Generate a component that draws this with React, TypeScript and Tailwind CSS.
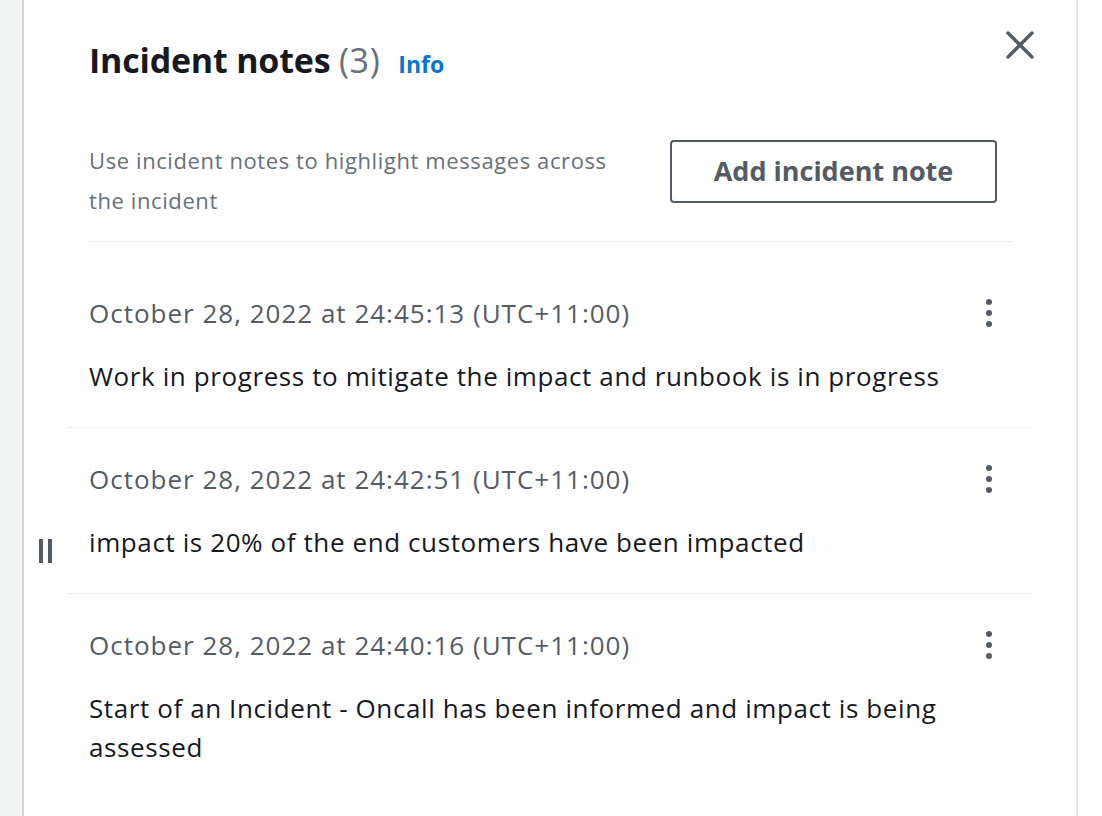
const notes = [
  {
    time: "October 28, 2022 at 24:45:13 (UTC+11:00)",
    text: "Work in progress to mitigate the impact and runbook is in progress",
  },
  {
    time: "October 28, 2022 at 24:42:51 (UTC+11:00)",
    text: "impact is 20% of the end customers have been impacted",
  },
  {
    time: "October 28, 2022 at 24:40:16 (UTC+11:00)",
    text: "Start of an Incident - Oncall has been informed and impact is being assessed",
  },
];

function Kebab() {
  return (
    <button className="flex h-9 w-6 flex-col items-center justify-center gap-[5px]">
      <span className="h-[6px] w-[6px] rounded-full bg-[#545b64]" />
      <span className="h-[6px] w-[6px] rounded-full bg-[#545b64]" />
      <span className="h-[6px] w-[6px] rounded-full bg-[#545b64]" />
    </button>
  );
}

export default function App() {
  return (
    <div
      className="flex h-[816px] w-[1102px] overflow-hidden bg-white"
      style={{ fontFamily: '"Open Sans", "Noto Sans", sans-serif' }}
    >
      {/* left gutter */}
      <div className="w-[24px] shrink-0 border-r-2 border-[#d1d5db] bg-[#f2f3f3]" />

      {/* panel */}
      <div className="relative w-[1054px] shrink-0 border-r-2 border-[#dfe3e6] pt-[40px]">
        {/* header */}
        <div className="flex items-start justify-between pl-[65px] pr-[42px]">
          <div className="flex items-baseline gap-[18px] text-[#16191f]">
            <h2 className="text-[34px] leading-[40px] font-bold tracking-[-0.2px]">
              Incident notes{" "}
              <span className="tracking-[0.6px] font-normal text-[#687078]">(3)</span>
            </h2>
            <a className="text-[23px] font-bold text-[#0972d3]">Info</a>
          </div>
          <button className="-mt-[9px] text-[#545b64]">
            <svg width="28" height="28" viewBox="0 0 28 28" fill="none">
              <path
                d="M2 2L26 26M26 2L2 26"
                stroke="currentColor"
                strokeWidth="3.4"
                strokeLinecap="round"
              />
            </svg>
          </button>
        </div>

        {/* description + action */}
        <div className="mt-[58px] pl-[65px] pr-[64px]">
          <div className="flex items-start justify-between border-b border-[#e9ebed] pb-[21px]">
            <p className="w-[545px] text-[22px] leading-[40px] tracking-[0.6px] text-[#687078]">
              Use incident notes to highlight messages across the incident
            </p>
            <button className="mr-[15px] h-[63px] w-[327px] rounded-[4px] border-2 border-[#545b64] text-[27px] font-bold text-[#545b64]">
              Add incident note
            </button>
          </div>
        </div>

        {/* notes */}
        <ul className="mt-[20px] px-[44px]">
          {notes.map((n, i) => (
            <li
              key={i}
              className="border-b border-[#e9ebed] pt-[33px] pb-[31px] last:border-b-0"
            >
              <div className="flex items-center justify-between pl-[21px] pr-[31px]">
                <span className="text-[26px] leading-[36px] tracking-[1px] text-[#545b64]">
                  {n.time}
                </span>
                <Kebab />
              </div>
              <p className="mt-[26px] max-w-[890px] pl-[21px] text-[26px] leading-[39px] tracking-[0.6px] text-[#16191f]">
                {n.text}
              </p>
            </li>
          ))}
        </ul>

        {/* resize handle */}
        <div className="absolute top-[539px] left-[15px] flex gap-[5px]">
          <span className="h-[24px] w-[4px] bg-[#545b64]" />
          <span className="h-[24px] w-[4px] bg-[#545b64]" />
        </div>
      </div>

      <div className="flex-1 bg-white" />
    </div>
  );
}
